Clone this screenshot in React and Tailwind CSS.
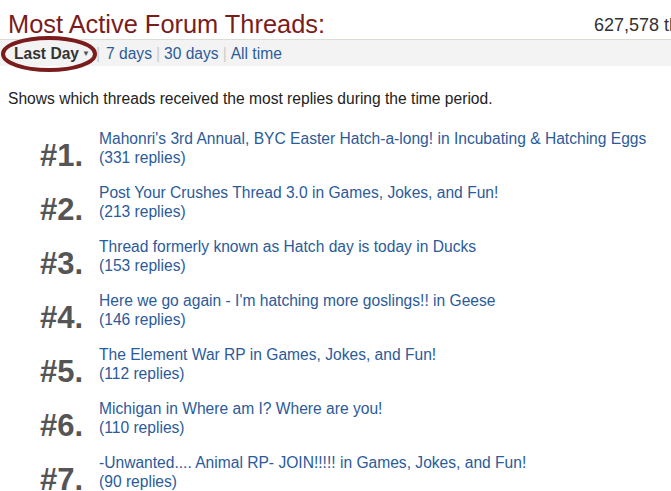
const threads = [
  { title: "Mahonri's 3rd Annual, BYC Easter Hatch-a-long!", forum: 'Incubating & Hatching Eggs', replies: 331 },
  { title: 'Post Your Crushes Thread 3.0', forum: 'Games, Jokes, and Fun!', replies: 213 },
  { title: 'Thread formerly known as Hatch day is today', forum: 'Ducks', replies: 153 },
  { title: "Here we go again - I'm hatching more goslings!!", forum: 'Geese', replies: 146 },
  { title: 'The Element War RP', forum: 'Games, Jokes, and Fun!', replies: 112 },
  { title: 'Michigan', forum: 'Where am I? Where are you!', replies: 110 },
  { title: '-Unwanted.... Animal RP- JOIN!!!!!', forum: 'Games, Jokes, and Fun!', replies: 90 },
];

export default function App() {
  return (
    <div className="w-[671px] h-[491px] overflow-hidden bg-white font-['Liberation_Sans',Arial,sans-serif] text-[#222]">
      <div className="flex items-start pt-[10px] pl-[8px]">
        <h1 className="w-[586px] shrink-0 text-[25.4px] leading-[28px] text-[#7b1c1c]">Most Active Forum Threads:</h1>
        <div className="whitespace-nowrap text-[18px] leading-[22px] text-[#333] mt-[4px]">627,578 threads</div>
      </div>
      <div className="relative mt-[1px] flex h-[27px] items-center border-t border-[#dcdcd4] bg-[#f3f3f3] pl-[14px] pt-[2px] text-[15.6px]">
        <span className="font-bold text-[#333]">Last Day</span>
        <span className="ml-[3px] text-[8px] text-[#555]">▼</span>
        <span className="mx-[6px] text-[#ccc]">|</span>
        <span className="text-[#2b5b9a]">7 days</span>
        <span className="mx-[4px] text-[#ccc]">|</span>
        <span className="text-[#2b5b9a]">30 days</span>
        <span className="mx-[4px] text-[#ccc]">|</span>
        <span className="text-[#2b5b9a]">All time</span>
        <svg className="absolute left-[1px] top-[-5px]" width="98" height="38" viewBox="0 0 98 38">
          <ellipse cx="48" cy="19" rx="46" ry="16" fill="none" stroke="#7b1c1c" strokeWidth="4" />
        </svg>
      </div>
      <p className="mt-[23px] pl-[8px] text-[15.6px] leading-[19px]">
        Shows which threads received the most replies during the time period.
      </p>
      <div className="mt-[21px] flex flex-col gap-[16px]">
        {threads.map((t, i) => (
          <div key={i} className="flex items-end">
            <div className="w-[99px] pr-[16px] text-right text-[31px] font-bold leading-[30px] text-[#555] -mb-[4px]">
              #{i + 1}.
            </div>
            <div className="text-[15.6px] leading-[19px] text-[#2b5b9a]">
              <div className="whitespace-nowrap">
                {t.title} in {t.forum}
              </div>
              <div>({t.replies} replies)</div>
            </div>
          </div>
        ))}
      </div>
    </div>
  );
}
